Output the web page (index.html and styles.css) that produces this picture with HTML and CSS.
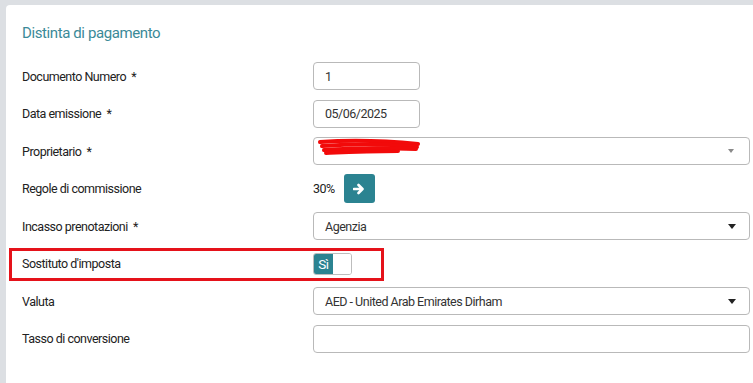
FILE: index.html
```html
<!DOCTYPE html>
<html lang="it">
<head>
    <meta charset="UTF-8">
    <meta name="viewport" content="width=device-width, initial-scale=1.0">
    <title>Distinta di pagamento</title>
    <link rel="stylesheet" href="styles.css">
</head>
<body>
    <div class="card">
        <h2 class="card-title">Distinta di pagamento</h2>

        <form class="form">
            <div class="row">
                <label for="docNum">Documento Numero&nbsp; *</label>
                <input type="text" id="docNum" class="field short" value="1">
            </div>

            <div class="row">
                <label for="dataEm">Data emissione&nbsp; *</label>
                <input type="text" id="dataEm" class="field short" value="05/06/2025">
            </div>

            <div class="row">
                <label>Proprietario&nbsp; *</label>
                <div class="field select muted">
                    <svg class="scribble" width="104" height="20" viewBox="0 0 104 20">
                        <path d="M2 4 C30 2, 70 3, 100 6" />
                        <path d="M4 8 C35 6, 70 6, 99 9" />
                        <path d="M6 12 C35 10, 70 10, 98 11" />
                        <path d="M8 15 C30 14, 50 13, 80 13" />
                    </svg>
                    <span class="caret"></span>
                </div>
            </div>

            <div class="row">
                <label>Regole di commissione</label>
                <div class="commission">
                    <span>30%</span>
                    <button type="button" class="btn-go">
                        <svg width="12" height="12" viewBox="0 0 12 12">
                            <path d="M1 6 H9 M5.5 2 L9.5 6 L5.5 10" fill="none" stroke="#fff" stroke-width="2.6" stroke-linecap="round" stroke-linejoin="round"/>
                        </svg>
                    </button>
                </div>
            </div>

            <div class="row">
                <label>Incasso prenotazioni&nbsp; *</label>
                <div class="field select">
                    <span>Agenzia</span>
                    <span class="caret"></span>
                </div>
            </div>

            <div class="row highlight">
                <label>Sostituto d'imposta</label>
                <div class="switch">
                    <span class="switch-on">Sì</span>
                    <span class="switch-off"></span>
                </div>
            </div>

            <div class="row">
                <label>Valuta</label>
                <div class="field select">
                    <span>AED - United Arab Emirates Dirham</span>
                    <span class="caret"></span>
                </div>
            </div>

            <div class="row">
                <label for="tasso">Tasso di conversione</label>
                <input type="text" id="tasso" class="field">
            </div>
        </form>
    </div>
</body>
</html>
```

FILE: styles.css
```css
* {
    box-sizing: border-box;
    margin: 0;
    padding: 0;
    font-family: "Liberation Sans Narrow", "Roboto", sans-serif;
    letter-spacing: -0.5px;
}
body {
    background: #dcdfe3;
    padding: 5px 0 0 6px;
    overflow: hidden;
    height: 383px;
}
.card {
    background: #fff;
    border-radius: 4px 0 0 0;
    padding: 18px 3px 0 16px;
    height: 378px;
}
.card-title {
    font-size: 15px;
    font-weight: normal;
    letter-spacing: -0.4px;
    color: #3b8a98;
    line-height: 20px;
    margin-bottom: 19px;
}
.form {
    display: flex;
    flex-direction: column;
    gap: 9.5px;
}
.row {
    display: grid;
    grid-template-columns: 291px 437px;
    align-items: center;
    min-height: 28px;
    position: relative;
}
label {
    font-size: 12.5px;
    color: #222;
}
.field {
    height: 28px;
    border: 1px solid #b9b9b9;
    border-radius: 4px;
    padding: 0 11px;
    font-size: 12.5px;
    color: #333;
    background: #fff;
    width: 100%;
    outline: none;
}
.field.short {
    width: 107px;
}
.select {
    display: flex;
    align-items: center;
    justify-content: space-between;
}
.caret {
    width: 0;
    height: 0;
    border-left: 4px solid transparent;
    border-right: 4px solid transparent;
    border-top: 5px solid #222;
    margin-right: 2px;
}
.muted .caret {
    border-top-color: #8a8a8a;
    border-left-width: 3.5px;
    border-right-width: 3.5px;
    border-top-width: 4px;
    margin-right: 4px;
}
.scribble {
    margin-left: -7px;
    margin-top: -6px;
}
.scribble path {
    fill: none;
    stroke: #f20a0a;
    stroke-width: 4;
    stroke-linecap: round;
}
.commission {
    display: flex;
    align-items: center;
    gap: 9px;
    height: 28px;
    font-size: 12.5px;
    color: #222;
}
.btn-go {
    width: 31px;
    height: 29px;
    border: none;
    border-radius: 3px;
    background: #2b8391;
    display: flex;
    align-items: center;
    justify-content: center;
}
.switch {
    display: flex;
    width: 39px;
    height: 22px;
    border: 1px solid #bdbdbd;
    border-radius: 3px;
    overflow: hidden;
}
.switch-on {
    width: 19px;
    background: #2b8391;
    color: #fff;
    font-size: 13.5px;
    line-height: 20px;
    text-align: center;
}
.switch-off {
    flex: 1;
    background: #fff;
}
.highlight::before {
    content: "";
    position: absolute;
    left: -13px;
    top: -2px;
    width: 369px;
    height: 27px;
    border: 3px solid #e5121a;
    pointer-events: none;
}
```
